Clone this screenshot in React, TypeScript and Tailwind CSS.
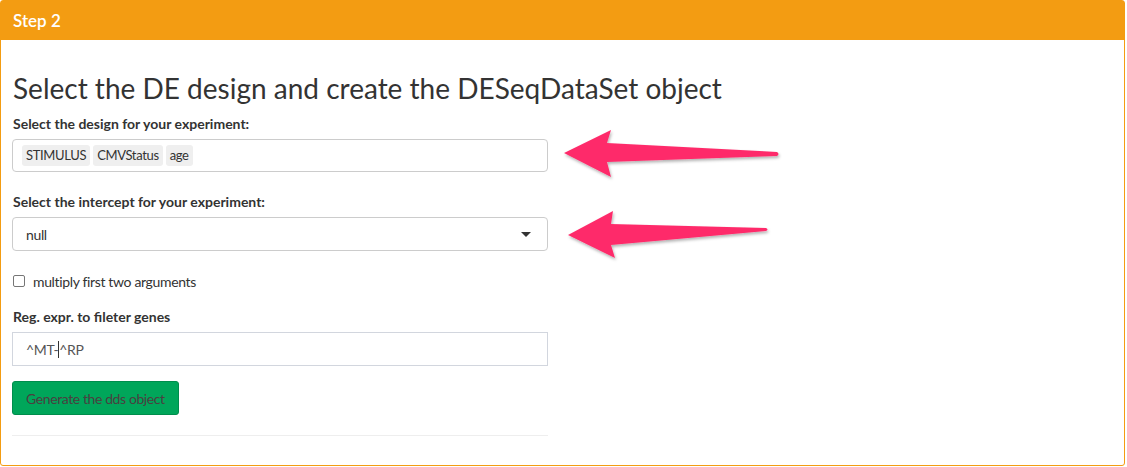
import React from "react";

function Arrows() {
  return (
    <svg
      className="absolute left-0 top-0 pointer-events-none"
      width="1127"
      height="467"
      viewBox="0 0 1127 467"
    >
      <defs>
        <filter id="arrowShadow" x="-10%" y="-30%" width="120%" height="160%">
          <feDropShadow dx="1" dy="2" stdDeviation="1.5" floodColor="#000" floodOpacity="0.3" />
        </filter>
      </defs>
      <path
        d="M564 153 L611 130 L607 143 L777 152 Q780 154 777 156 L607 162 L611 177 Z"
        fill="#fe2c6b"
        filter="url(#arrowShadow)"
      />
      <path
        d="M568 235 L613 211 L611 224 L766 228 Q769 229.5 766 231 L611 245 L615 258 Z"
        fill="#fe2c6b"
        filter="url(#arrowShadow)"
      />
    </svg>
  );
}

function Tag({ text }: { text: string }) {
  return (
    <span className="h-[21px] px-1 rounded-[3px] bg-[#efefef] text-[#333] text-[13px] tracking-[-0.35px] leading-[21px]">
      {text}
    </span>
  );
}

export default function App() {
  return (
    <div className="relative w-[1127px] h-[467px] bg-white font-['Lato',sans-serif] text-[#333]">
      <div className="w-[1125px] h-[466px] border border-[#f39c12] rounded-[3px] flex flex-col">
        {/* box header */}
        <div className="h-[39px] bg-[#f39c12] px-3 flex items-center text-white text-[17px] font-semibold">
          Step 2
        </div>

        {/* box body */}
        <div className="px-[11px] flex flex-col w-[558px]">
          <h3 className="mt-[33px] h-[30px] leading-[30px] text-[28px] font-normal text-[#333] pl-[1px] whitespace-nowrap">
            Select the DE design and create the DESeqDataSet object
          </h3>

          <label className="mt-[11px] h-[20px] leading-[20px] text-[14px] font-bold pl-[1px]">
            Select the design for your experiment:
          </label>
          <div className="mt-[5px] w-[536px] h-[33px] border border-[#cccccc] rounded-[4px] pl-[9px] flex items-center gap-[3px]">
            <Tag text="STIMULUS" />
            <Tag text="CMVStatus" />
            <Tag text="age" />
          </div>

          <label className="mt-[20px] h-[20px] leading-[20px] text-[14px] font-bold pl-[1px]">
            Select the intercept for your experiment:
          </label>
          <div className="mt-[5px] w-[536px] h-[34px] border border-[#cccccc] rounded-[4px] pl-[13px] pr-[16px] flex items-center justify-between text-[14px] tracking-[-0.35px]">
            <span>null</span>
            <svg width="10" height="5" viewBox="0 0 10 5">
              <path d="M0 0 L10 0 L5 5 Z" fill="#333" />
            </svg>
          </div>

          <div className="mt-[20px] h-[20px] flex items-center gap-[8px] text-[14px] tracking-[-0.35px] pl-[1px]">
            <span className="w-[12px] h-[12px] border border-[#767676] rounded-[2px] bg-white" />
            <span>multiply first two arguments</span>
          </div>

          <label className="mt-[16px] h-[20px] leading-[20px] text-[14px] font-bold pl-[1px]">
            Reg. expr. to fileter genes
          </label>
          <div className="mt-[5px] w-[536px] h-[34px] border border-[#d2d6de] pl-[13px] flex items-center text-[14px] tracking-[-0.35px] text-[#555]">
            <span>^MT-</span>
            <span className="w-[1px] h-[17px] bg-[#333]" />
            <span>^RP</span>
          </div>

          <div className="mt-[15px]">
            <button className="h-[34px] px-[13px] bg-[#00a65a] border border-[#008d4c] rounded-[3px] text-[14px] tracking-[-0.4px] text-[#4a4040]">
              Generate the dds object
            </button>
          </div>

          <div className="mt-[20px] w-[536px] h-[1px] bg-[#eeeeee]" />
        </div>
      </div>
      <Arrows />
    </div>
  );
}
